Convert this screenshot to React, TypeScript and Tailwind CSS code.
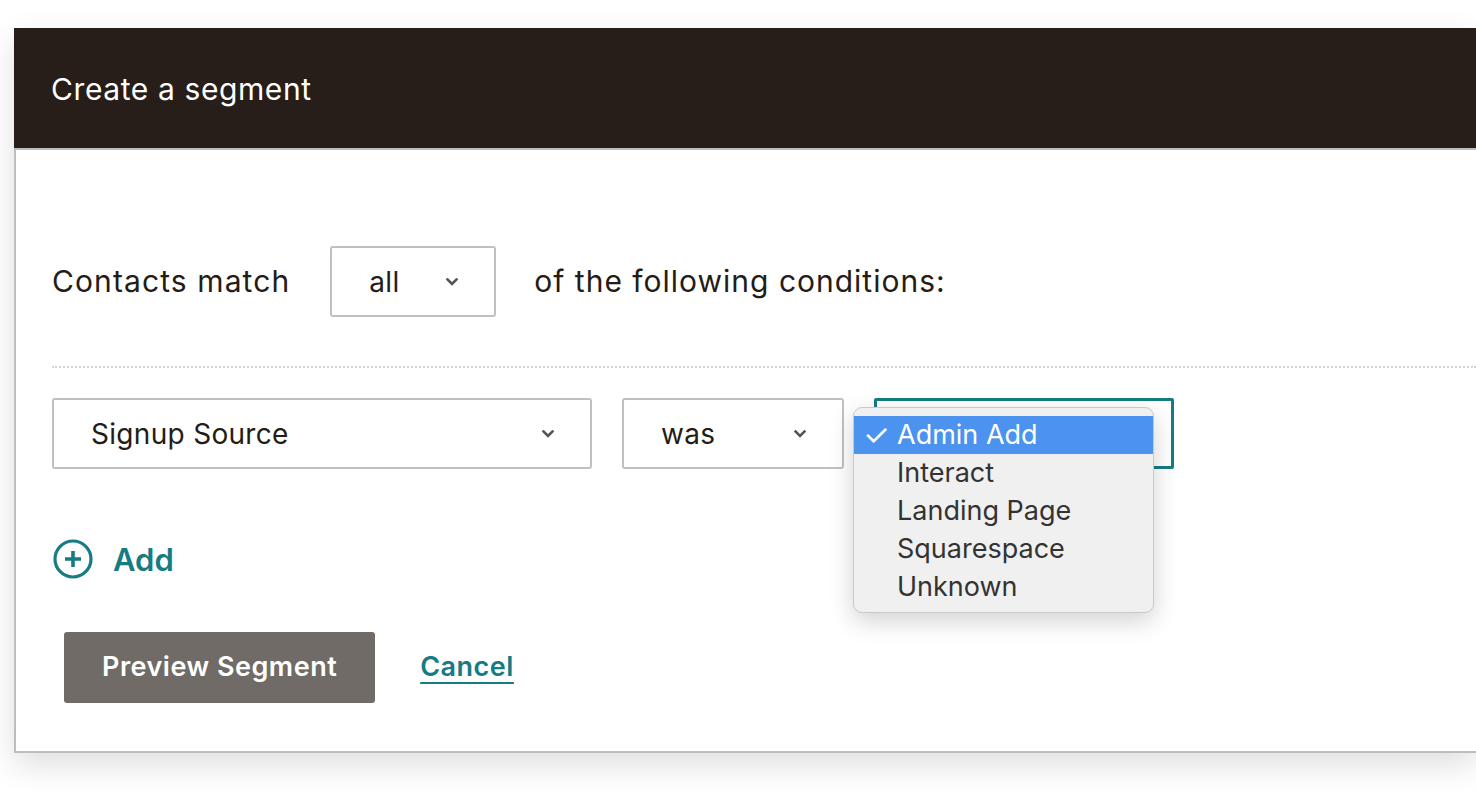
import React from 'react';

const Chevron = () => (
    <svg width="12" height="8" viewBox="0 0 12 8" className="shrink-0">
        <path d="M1.5 1.5 L6 6 L10.5 1.5" fill="none" stroke="#545454" strokeWidth="2.6" strokeLinecap="square" />
    </svg>
);

const SelectBox = ({ label, className }: { label: string; className: string }) => (
    <div className={`h-[71px] flex items-center justify-between pl-[37px] pr-[36px] border-2 border-[#c2bfbc] rounded-[3px] bg-white ${className}`}>
        <span>{label}</span>
        <Chevron />
    </div>
);

const options = ['Admin Add', 'Interact', 'Landing Page', 'Squarespace', 'Unknown'];

export default function App() {
    return (
        <div className="w-full h-[804px] bg-white overflow-hidden pt-[28px] pl-[14px] font-['Inter',sans-serif] text-[#241c15]">
            <div className="shadow-[0_12px_30px_rgba(0,0,0,0.13)]">
                <div className="h-[120px] bg-[#271e19] flex items-center pl-[37px] pt-[2px]">
                    <h1 className="text-[30px] text-white tracking-[0.6px]">Create a segment</h1>
                </div>

                <div className="bg-white border-t-2 border-l-2 border-b-2 border-[#bdbdbd] pt-[96px] pb-[48px] pl-[36px]">
                    <div className="flex items-center">
                        <span className="mr-[40px] text-[30px] tracking-[1.1px]">Contacts match</span>
                        <SelectBox label="all" className="w-[166px] text-[28px] tracking-[0.3px]" />
                        <span className="ml-[38px] text-[30px] tracking-[1px]">of the following conditions:</span>
                    </div>

                    <div className="mt-[49px] border-t-2 border-dotted border-[#d4d4d4]" />

                    <div className="mt-[30px] flex items-center gap-[30px] text-[28px] tracking-[0.3px]">
                        <SelectBox label="Signup Source" className="w-[540px]" />
                        <SelectBox label="was" className="w-[222px]" />
                        <div className="relative w-[300px] h-[71px] border-[3px] border-[#157c84] rounded-[2px]">
                            <div className="absolute left-[-24px] top-[6px] w-[301px] pt-[8px] pb-[6px] bg-[#f0f0f0] border border-[#c9c9c9] rounded-[9px] shadow-[0_8px_24px_rgba(0,0,0,0.18)] text-[27px] tracking-[0px] text-[#333333] z-10">
                                {options.map((o, i) => (
                                    <div key={o} className={`h-[38px] flex items-center ${i === 0 ? 'bg-[#4b93ee] text-white' : ''}`}>
                                        <span className="w-[43px] pl-[9px] text-[30px] leading-none">{i === 0 ? '✓' : ''}</span>
                                        <span>{o}</span>
                                    </div>
                                ))}
                            </div>
                        </div>
                    </div>

                    <div className="mt-[69px] h-[42px] flex items-center gap-[19px] text-[#157c84]">
                        <svg width="42" height="42" viewBox="0 0 42 42">
                            <circle cx="21" cy="21" r="18" fill="none" stroke="#157c84" strokeWidth="3.2" />
                            <path d="M21 13 V29 M13 21 H29" stroke="#157c84" strokeWidth="3.6" />
                        </svg>
                        <span className="text-[31px] font-semibold leading-none">Add</span>
                    </div>

                    <div className="mt-[52px] ml-[12px] flex items-center gap-[45px]">
                        <button className="h-[71px] px-[38px] bg-[#716b67] rounded-[3px] text-white text-[27px] tracking-[0.5px] font-semibold">
                            Preview Segment
                        </button>
                        <a className="text-[27px] tracking-[0.5px] font-semibold text-[#157c84] underline underline-offset-[6px] decoration-2">Cancel</a>
                    </div>
                </div>
            </div>
        </div>
    );
}
